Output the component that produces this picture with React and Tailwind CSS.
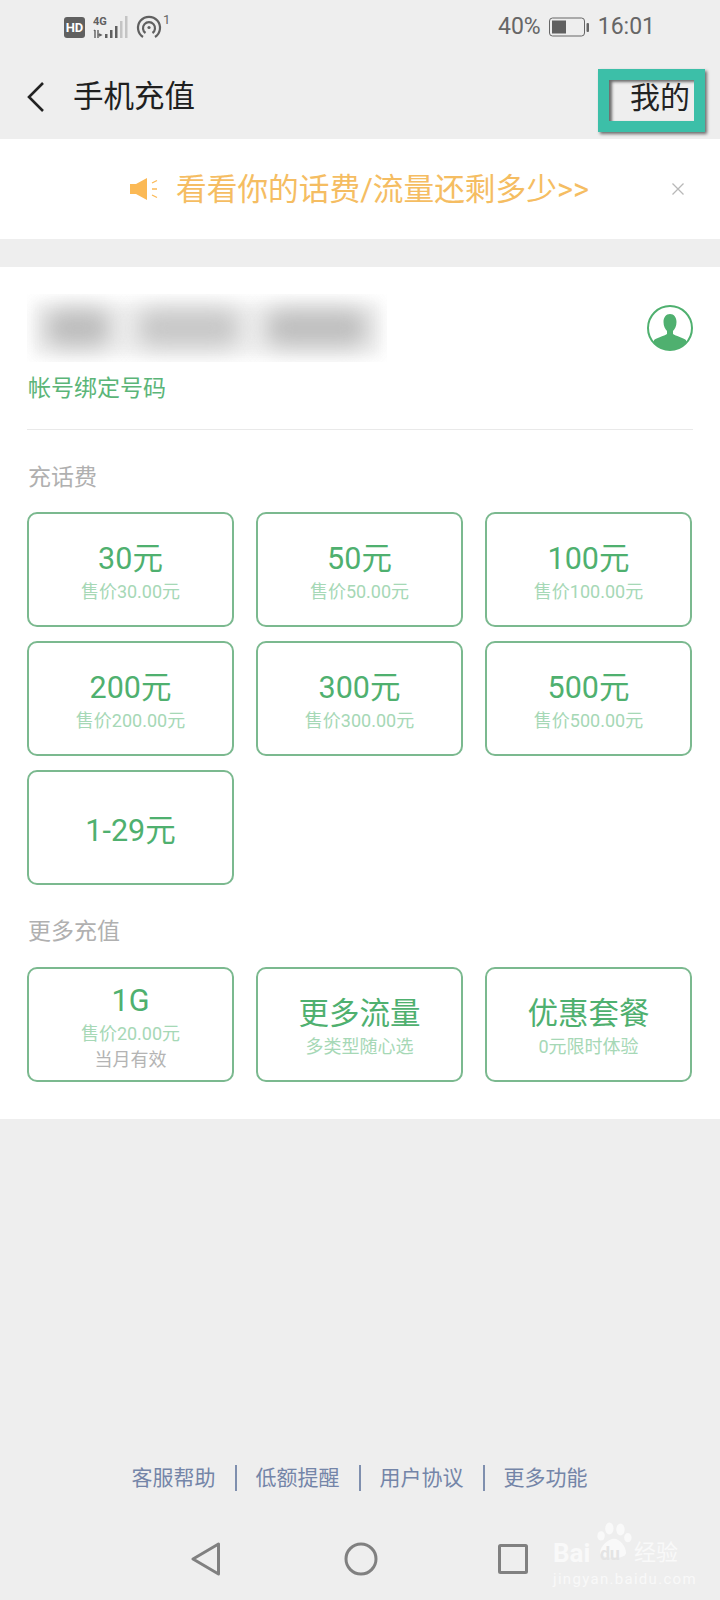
const FONT = "font-['Roboto','Noto_Sans_CJK_SC',sans-serif]";

function Card({ title, sub, extra, tight }) {
  return (
    <div className={`h-[115px] rounded-[10px] border-2 border-[#7bb98f] bg-white flex flex-col items-center justify-center ${tight ? "pt-[5px]" : "pt-[7px]"}`}>
      <div className="text-[30.5px] leading-[38px] text-[#4fb06f]">{title}</div>
      {sub && <div className="text-[18px] leading-[28px] text-[#a6d8b6]">{sub}</div>}
      {extra && <div className="text-[18px] leading-[24px] text-[#b4b4b4]">{extra}</div>}
    </div>
  );
}

function StatusBar() {
  return (
    <div className="h-[54px] flex items-center justify-between pl-[64px] pr-[65px] text-[#666666]">
      <div className="flex items-center">
        <div className="w-[21px] h-[21px] rounded-[3px] bg-[#606060] text-white text-[13px] font-bold leading-[21px] text-center">HD</div>
        <svg className="ml-[8px]" width="36" height="24" viewBox="0 0 36 24">
          <text x="0" y="10" fontSize="11" fontWeight="700" fill="#606060" fontFamily="Roboto">4G</text>
          <path d="M2 15v8M1 16l1-1M5 15v8M6 19l2 1-2 1" stroke="#606060" strokeWidth="1.4" fill="none" />
          <rect x="12" y="19" width="2.5" height="4" fill="#606060" />
          <rect x="17" y="15" width="2.5" height="8" fill="#606060" />
          <rect x="22" y="11" width="2.5" height="12" fill="#606060" />
          <rect x="27" y="6" width="2.5" height="17" fill="#c4c4c4" />
          <rect x="32" y="1" width="2.5" height="22" fill="#c4c4c4" />
        </svg>
        <svg className="ml-[7px]" width="26" height="24" viewBox="0 0 26 24" fill="none" stroke="#606060" strokeWidth="2.2">
          <path d="M7 22A11 11 0 1 1 19 22" />
          <path d="M9.5 18A6 6 0 1 1 16.5 18" />
          <circle cx="13" cy="12.5" r="1.6" fill="#606060" stroke="none" />
        </svg>
        <span className="text-[13px] leading-[14px] self-start -mt-[2px] ml-[1px]">1</span>
      </div>
      <div className="flex items-center">
        <span className="text-[23px] leading-[26px]">40%</span>
        <svg className="ml-[8px]" width="41" height="20" viewBox="0 0 41 20">
          <rect x="0.5" y="1" width="35" height="18" rx="3" fill="none" stroke="#666666" strokeWidth="1" />
          <rect x="3" y="3.5" width="14" height="13" fill="#606060" />
          <rect x="37.5" y="6" width="2.5" height="9" rx="1" fill="#666666" />
        </svg>
        <span className="ml-[8px] text-[23px] leading-[26px]">16:01</span>
      </div>
    </div>
  );
}

function Header() {
  return (
    <div className="h-[85px] flex items-center justify-between pl-[26px] pr-[15px]">
      <div className="flex items-center">
        <svg width="19" height="32" viewBox="0 0 19 32" fill="none" stroke="#222222" strokeWidth="2.6">
          <path d="M17 2 3 16l14 14" />
        </svg>
        <span className="ml-[28px] text-[30.5px] leading-[40px] text-[#1f1f1f]">手机充值</span>
      </div>
      <div className="w-[107px] h-[63px] mt-[8px] border-[11px] border-[#3cbfa8] bg-[#eeeeee] shadow-[2px_2px_3px_rgba(0,0,0,0.55)] flex items-center justify-end overflow-hidden relative">
        <div className="absolute inset-0 shadow-[inset_3px_2px_3px_rgba(0,0,0,0.55)]" />
        <span className="text-[30px] leading-[36px] text-[#222222] mr-[4px] -mt-[5px]">我的</span>
      </div>
    </div>
  );
}

function Banner() {
  return (
    <div className="h-[100px] bg-white flex items-center pl-[130px] pr-[36px]">
      <svg width="29" height="24" viewBox="0 0 29 24">
        <path d="M0 7h6L17 1v22L6 17H0z" fill="#fbb955" />
        <path d="M22 6l5-2.500M22 12h5M22 18l5 2.500" stroke="#fbb955" strokeWidth="1.3" fill="none" />
      </svg>
      <span className="ml-[17px] mt-[2px] text-[30.7px] leading-[40px] text-[#f5bd62]">看看你的话费/流量还剩多少&gt;&gt;</span>
      <svg className="ml-auto" width="12" height="12" viewBox="0 0 12 12" stroke="#b8b8b8" strokeWidth="1.3">
        <path d="M0.5 0.5l11 11M11.5 0.5l-11 11" />
      </svg>
    </div>
  );
}

function Account() {
  return (
    <div className="flex justify-between items-start">
      <div>
        <div className="relative w-[360px] h-[68px] -mt-[2px] overflow-hidden flex items-center pl-[19px]">
          <div className="absolute left-[6px] right-[6px] top-[8px] bottom-[6px] bg-[#efefef] blur-[7px]" />
          <div className="relative w-[64px] h-[36px] bg-[#bbbbbb] rounded-[14px] blur-[11px]" />
          <div className="relative ml-[28px] w-[101px] h-[36px] bg-[#c6c6c6] rounded-[14px] blur-[11px]" />
          <div className="relative ml-[27px] w-[101px] h-[36px] bg-[#bdbdbd] rounded-[14px] blur-[11px]" />
        </div>
        <div className="mt-[12px] ml-[1px] text-[23px] leading-[30px] text-[#5bb578]">帐号绑定号码</div>
      </div>
      <svg className="mt-[9px]" width="46" height="46" viewBox="0 0 46 46">
        <clipPath id="c"><circle cx="23" cy="23" r="22" /></clipPath>
        <circle cx="23" cy="23" r="22" fill="#ffffff" stroke="#4fb06f" strokeWidth="2" />
        <path clipPath="url(#c)" d="M23 9c4 0 6.5 3.5 6.5 8 0 4-1.5 7-3.5 9v3c3 2 9 3.500 13 6v11H7V35c4-2.500 10-4 13-6v-3c-2-2-3.500-5-3.500-9 0-4.500 2.500-8 6.500-8z" fill="#4fb06f" />
      </svg>
    </div>
  );
}

function Watermark() {
  return (
    <div className="absolute left-[553px] top-[1522px] w-[126px] h-[64px] text-[#f9f9f9] pointer-events-none">
      <svg className="absolute left-[42px] top-0" width="38" height="37" viewBox="0 0 40 40" fill="#f9f9f9">
        <ellipse cx="6" cy="15" rx="4" ry="5" />
        <ellipse cx="15" cy="7" rx="4.500" ry="6.500" />
        <ellipse cx="27" cy="8" rx="4.500" ry="6.500" />
        <ellipse cx="35" cy="17" rx="4" ry="5" />
        <path d="M20 18c6 0 13 8 13 15 0 5-8 6-13 5-5 1-15 0-15-5 0-7 9-15 15-15z" />
      </svg>
      <span className="absolute left-0 top-[18px] font-bold text-[26px] leading-[26px]">Bai</span>
      <span className="absolute left-[47px] top-[21px] font-bold text-[#e4e4e4] text-[18px] leading-[22px] tracking-[-0.5px]">du</span>
      <span className="absolute left-[81px] top-[18px] text-[22px] leading-[26px]">经验</span>
      <span className="absolute left-0 top-[49px] text-[15px] leading-[16px] tracking-[1.3px]">jingyan.baidu.com</span>
    </div>
  );
}

export default function App() {
  return (
    <div className={`${FONT} relative w-[720px] h-[1600px] bg-[#eeeeee] flex flex-col overflow-hidden`}>
      <StatusBar />
      <Header />
      <Banner />
      <div className="mt-[28px] h-[852px] bg-white pt-[29px] px-[27px]">
        <Account />
        <div className="mt-[25px] h-px bg-[#e9e9e9]" />
        <div className="mt-[32px] text-[23px] leading-[32px] text-[#b0b0b0] ml-[1px]">充话费</div>
        <div className="mt-[18px] mr-[1px] grid grid-cols-3 gap-x-[22px] gap-y-[14px]">
          <Card title="30元" sub="售价30.00元" />
          <Card title="50元" sub="售价50.00元" />
          <Card title="100元" sub="售价100.00元" />
          <Card title="200元" sub="售价200.00元" />
          <Card title="300元" sub="售价300.00元" />
          <Card title="500元" sub="售价500.00元" />
          <Card title="1-29元" />
        </div>
        <div className="mt-[31px] text-[23px] leading-[32px] text-[#b0b0b0] ml-[1px]">更多充值</div>
        <div className="mt-[19px] mr-[1px] grid grid-cols-3 gap-x-[22px]">
          <Card tight title="1G" sub="售价20.00元" extra="当月有效" />
          <Card title="更多流量" sub="多类型随心选" />
          <Card title="优惠套餐" sub="0元限时体验" />
        </div>
      </div>
      <div className="mt-[345px] flex items-center justify-center text-[21px] leading-[28px] text-[#7485a8] pr-[1px]">
        <span>客服帮助</span>
        <span className="mx-[19px] w-[2px] h-[26px] bg-[#7f8fae]" />
        <span>低额提醒</span>
        <span className="mx-[19px] w-[2px] h-[26px] bg-[#7f8fae]" />
        <span>用户协议</span>
        <span className="mx-[19px] w-[2px] h-[26px] bg-[#7f8fae]" />
        <span>更多功能</span>
      </div>
      <div className="mt-[50px] flex items-center pl-[191px]">
        <svg width="30" height="34" viewBox="0 0 30 34" fill="none" stroke="#808080" strokeWidth="3" strokeLinejoin="round">
          <path d="M27.500 2v30L2 17z" />
        </svg>
        <svg className="ml-[123px]" width="34" height="34" viewBox="0 0 34 34" fill="none" stroke="#808080" strokeWidth="3">
          <circle cx="17" cy="17" r="15" />
        </svg>
        <svg className="ml-[120px]" width="30" height="30" viewBox="0 0 30 30" fill="none" stroke="#808080" strokeWidth="3" strokeLinejoin="round">
          <rect x="1.500" y="1.500" width="27" height="27" rx="1" />
        </svg>
      </div>
      <Watermark />
    </div>
  );
}
